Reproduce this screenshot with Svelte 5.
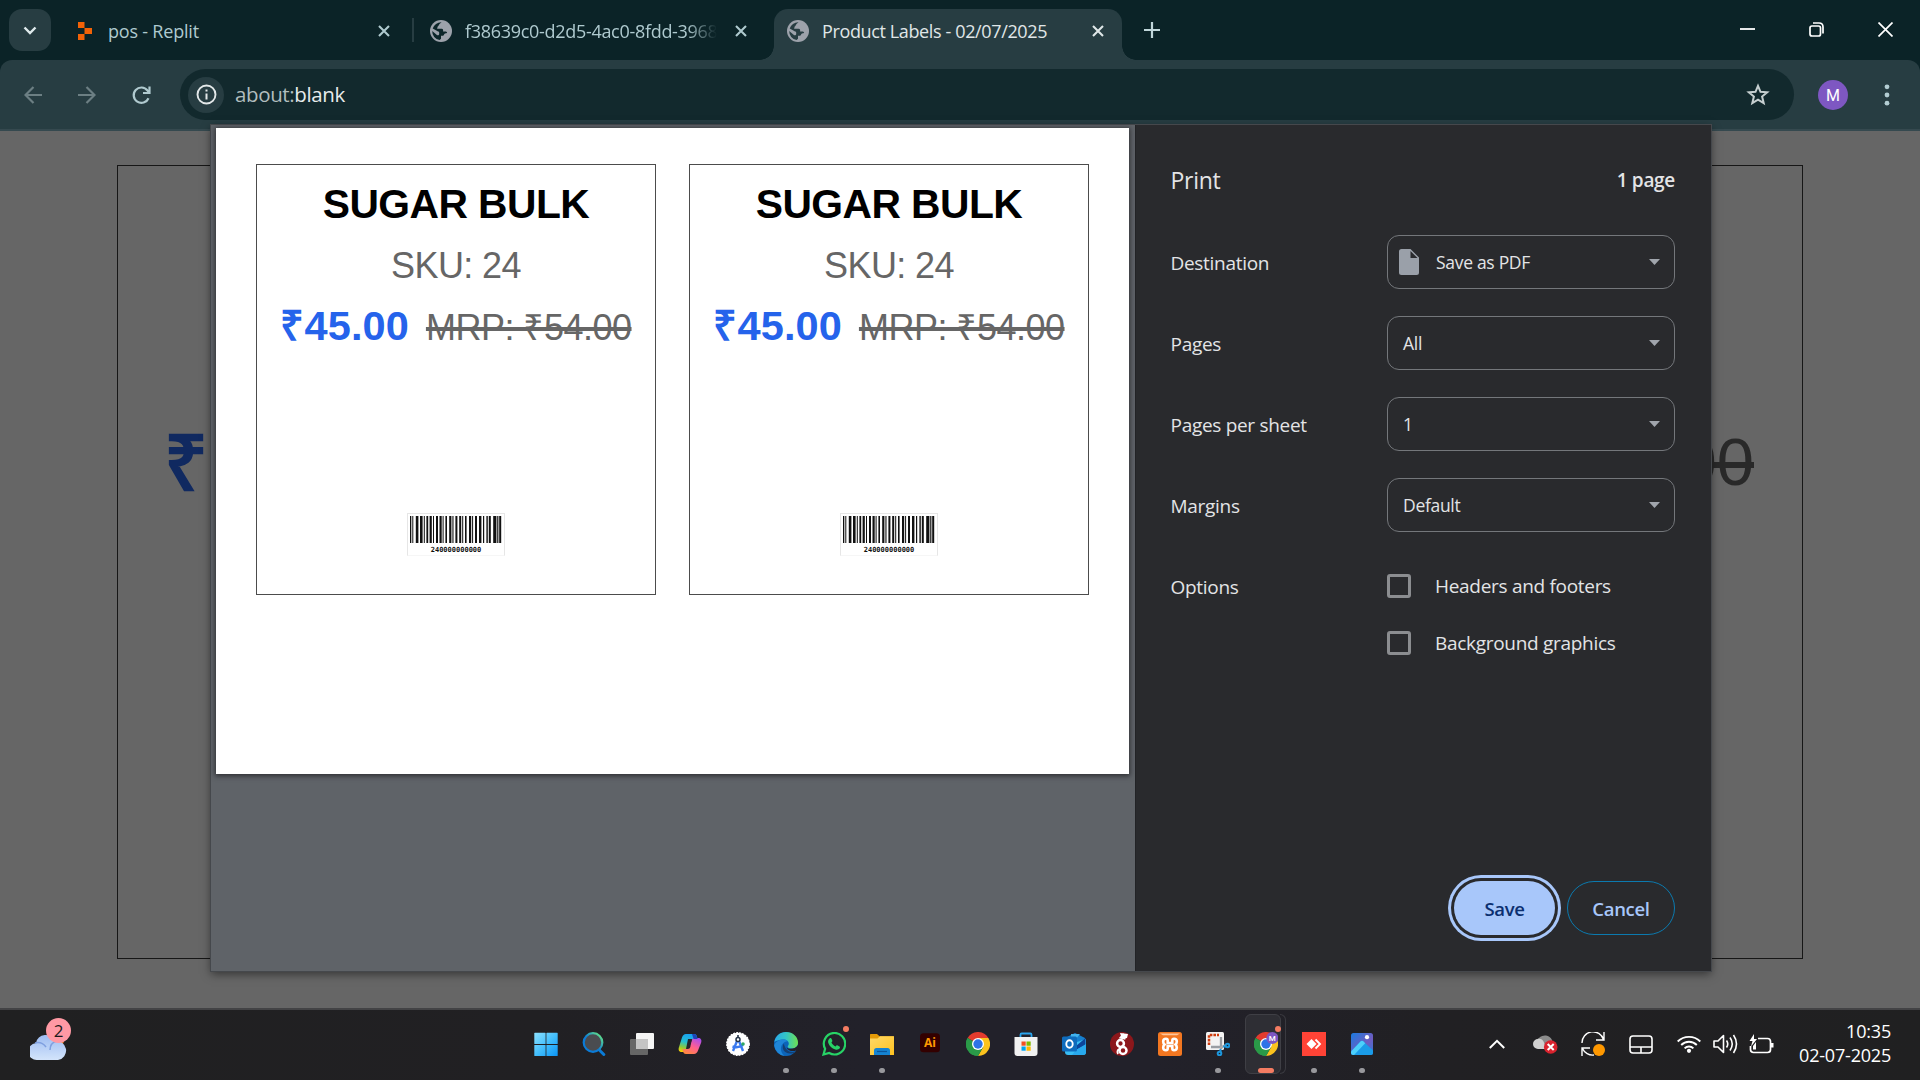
<script>
  const tabs = [
    { title: 'pos - Replit', icon: 'replit' },
    { title: 'f38639c0-d2d5-4ac0-8fdd-3968', icon: 'globe' },
    { title: 'Product Labels - 02/07/2025', icon: 'globe', active: true }
  ];
  const settings = [
    { label: 'Destination', value: 'Save as PDF', file: true },
    { label: 'Pages', value: 'All' },
    { label: 'Pages per sheet', value: '1' },
    { label: 'Margins', value: 'Default' }
  ];
  const options = ['Headers and footers', 'Background graphics'];
  const labels = [1, 2];
  // [x, width] of every barcode stripe
  const bars = [
    [0, 1.3], [2.3, 1], [5.8, 2.6], [10, 2.6], [13.8, 1], [16.4, 1.8], [19.6, 2.2], [23, 1],
    [26, 2], [29.5, 2.2], [32.6, 1], [35.4, 1.6], [39.2, 2.2], [42.4, 1.1], [45.4, 2], [49.2, 2],
    [52.2, 1], [55, 1.6], [59, 2.2], [62.1, 1], [65, 2], [69, 2.4], [73, 1.2], [76.4, 1.4],
    [78.8, 2], [83.2, 3.2], [87.2, 1.2], [89.2, 2]
  ];
  const apps = [
    { id: 'start' }, { id: 'search' }, { id: 'tasks' }, { id: 'copilot' }, { id: 'studio' },
    { id: 'edge', dot: true }, { id: 'whatsapp', dot: true, alert: true }, { id: 'folder', dot: true },
    { id: 'ai' }, { id: 'chrome' }, { id: 'store' }, { id: 'outlook' }, { id: 'dragon' },
    { id: 'xampp' }, { id: 'snip', dot: true }, { id: 'chromeM', open: true, alert: true },
    { id: 'anydesk', dot: true }, { id: 'photos', dot: true }
  ];
</script>

{#snippet cross()}
  <svg class="cross" width="12" height="12" viewBox="0 0 12 12"><path d="M1 1l10 10M11 1L1 11" /></svg>
{/snippet}

{#snippet globe()}
  <svg width="22" height="22" viewBox="0 0 22 22">
    <circle cx="11" cy="11" r="11" fill="#9da2ab" />
    <path class="sea" d="M11.5 2.2l-2 1.9c-.8.8-.6 1.9-1.8 2.5l-.6 2.1h4.6c1.6 0 1.6 2 1.4 2.7h2.6c1 0 1.4.9 1.4 1.7l-2.1.3c-1.2.4-.8 1.9-1.9 2.4H11v2.9l-1.4 1.3A8.8 8.8 0 0 1 2.2 11l4.7 4.1c1 .6 2.3.2 2.3-1.1v-1.6c-.2-1-1.5-1.1-2.4-1.7L2.7 8.6A8.8 8.8 0 0 1 11.500 2.200z" />
  </svg>
{/snippet}

{#snippet chrome()}
  <path d="M12 12L1.600 6A12 12 0 0 1 22.400 6z" fill="#e33b2e" />
  <path d="M12 12V24A12 12 0 0 1 1.600 6z" fill="#2a9a48" />
  <path d="M12 6h10.400A12 12 0 0 1 12 24l5.200-9z" fill="#fcc31e" />
  <path d="M6.800 15L1.600 6A12 12 0 0 0 12 24l5.200-9z" fill="#2a9a48" />
  <circle cx="12" cy="12" r="6" fill="#fff" />
  <circle cx="12" cy="12" r="4.700" fill="#2d73e8" />
{/snippet}

{#snippet app(id)}
  <svg width="24" height="24" viewBox="0 0 24 24">
    {#if id === 'start'}
      <g fill="url(#gStart)"><rect width="11.300" height="11.200" y=".8" x=".3" rx=".6" /><rect x="12.400" y=".8" width="11.300" height="11.200" rx=".6" /><rect x=".3" y="12.900" width="11.300" height="11.200" rx=".6" /><rect x="12.400" y="12.900" width="11.300" height="11.200" rx=".6" /></g>
    {:else if id === 'search'}
      <path d="M16.800 17.500l5 5" stroke="#0b7bd6" stroke-width="3" stroke-linecap="round" />
      <circle cx="11" cy="10.500" r="9.300" fill="#4a4c50" stroke="url(#gSearch)" stroke-width="2.200" />
    {:else if id === 'tasks'}
      <rect x="0" y="7" width="18" height="16" rx="1" fill="#666" />
      <rect x="6" y="1" width="18" height="16" rx="1" fill="#f5f5f5" />
      <rect x="6" y="7" width="12" height="10" fill="#c4c4c4" />
    {:else if id === 'copilot'}
      <path d="M8 2h8c2 0 2.600 1.200 3 3l.6 2h-4c-2 0-2.600 1-3 2.500L10.500 17c-.5 1.800-1.300 3-3.500 3H4c-3 0-4-2-3-5L4 5.500C4.800 3.200 6 2 8 2z" fill="url(#gCop1)" />
      <path d="M16 22H8c-2 0-2.600-1.200-3-3l-.6-2h4c2 0 2.600-1 3-2.500L13.500 9c.5-1.800 1.300-3 3.500-3h3c3 0 4 2 3 5l-3 7.500c-.8 2.300-2 3.500-4 3.500z" fill="url(#gCop2)" />
      <path d="M10 7h4l-1.600 7.500c-.5 1.800-1 2.500-3 2.500H8z" fill="#24242a" />
      <path d="M14 2h2c2 0 2.600 1.200 3 3l.6 2h-4z" fill="#1d45b8" />
    {:else if id === 'studio'}
      <circle cx="12" cy="12" r="11.300" fill="#fff" stroke="#fff" stroke-width="1.200" stroke-dasharray="2 1" />
      <path d="M12 6.500L7 19M12 6.500L17 19M6.500 14.500q5.500 2 10.500-1.500" fill="none" stroke="#3a7af0" stroke-width="2.400" />
      <circle cx="12" cy="7.500" r="2" fill="#fff" stroke="#26354a" stroke-width="1.500" /><path d="M12 3v2.500" stroke="#26354a" stroke-width="1.600" />
      <circle cx="17" cy="12" r="1.800" fill="#2fa866" />
    {:else if id === 'edge'}
      <circle cx="12" cy="12" r="12" fill="#0c64b9" />
      <path d="M.3 10C1.300 4 6 0 12 0c7 0 12 5 12 10.500 0 4-3 6-6.300 6-2.500 0-4-1-4-2 0-.7 1.100-1.200 1.100-3 0-2.300-2.300-4-5.300-4C5.500 7.500 1.500 9 .3 10z" fill="url(#gEdge)" />
      <path d="M9.500 7.500c-5 0-8.500 3-9.300 6A12 12 0 0 0 11 24c-4-2.500-5.500-8-2.500-12 1.300-1.500 3-2.500 5.300-2.700-1-1.200-2.600-1.800-4.300-1.800z" fill="#1f86d8" />
      <path d="M9.800 11.500c-2.800 4.500.2 10 6.200 10 2.500 0 4.500-.8 6-2.300-5 2-10.500.3-12.200-7.700z" fill="#143f73" />
      <path d="M24 13v6l-2-.5c-2 1-8 1.200-9.500-3 2.500 2.500 9 1.500 11.500-2.500z" fill="#23222a" />
    {:else if id === 'whatsapp'}
      <path d="M1.500 22.500l1.600-5.700A10.700 10.700 0 1 1 7.200 21z" fill="none" stroke="#27d366" stroke-width="2.200" />
      <path d="M7.500 6.500c.8-.8 1.700-.6 2 .2l.8 1.900c.2.700-.2 1.200-.9 2 .9 1.900 2.200 3 4.200 3.900.8-1 1.100-1.500 1.700-1.200l2.200 1.100c.8.400.5 1.500 0 2.200-.8 1-2.500 1.400-4.200.9-3.500-1.100-5.800-3.400-7-6.500-.5-1.600-.1-3.500 1.200-4.500z" fill="#27d366" />
    {:else if id === 'folder'}
      <path d="M0 4V2.500Q0 2 .8 2H7l2.500 2.300H23q1 0 1 .9V8H0z" fill="#e59b08" />
      <path d="M0 6.500h7.500L10 4.300h14V23H0z" fill="url(#gFold)" />
      <path d="M4 23v-4.500Q4 16 6.500 16h11q2.500 0 2.500 2.500V23z" fill="#1583d2" /><path d="M7 19.500h10" stroke="#0a559b" stroke-width="1.200" />
    {:else if id === 'ai'}
      <rect x="2" y="1.300" width="20" height="19" rx="3.500" fill="#330000" />
      <text x="12" y="15" class="ai" text-anchor="middle">Ai</text>
    {:else if id === 'chrome'}
      {@render chrome()}
    {:else if id === 'store'}
      <path d="M6.500 7V2.700Q6.500 1.500 7.700 1.500h8.600q1.200 0 1.200 1.200V7" fill="none" stroke="#2aa4ec" stroke-width="1.800" />
      <path d="M.5 5h23v16q0 3-3 3h-17q-3 0-3-3z" fill="#f1f1f1" />
      <path d="M7.500 9.500h4.200v4.200H7.500z" fill="#f25022" /><path d="M12.500 9.500h4.200v4.200h-4.200z" fill="#7fba00" /><path d="M7.500 14.500h4.200v4.200H7.500z" fill="#00a4ef" /><path d="M12.500 14.500h4.200v4.200h-4.200z" fill="#ffb900" />
    {:else if id === 'outlook'}
      <path d="M3 6l10-5 10 5v6H3z" fill="#1680cf" /><path d="M9 2h9l-9 11z" fill="#42b4ee" />
      <path d="M3 14L24 7v13q0 3-3 3H6q-3 0-3-3z" fill="#39bdf4" /><path d="M14 14l9.500-8v7L14 18z" fill="#0c459b" /><path d="M14 18l10-6v8q0 3-3 3H10z" fill="#28a9ed" />
      <rect x="0" y="4.500" width="15" height="15" rx="1.500" fill="#0f6cbd" />
      <ellipse cx="7.500" cy="12" rx="3.200" ry="3.700" fill="none" stroke="#fff" stroke-width="1.900" />
    {:else if id === 'dragon'}
      <circle cx="12" cy="12" r="12" fill="#8c171b" />
      <g fill="none" stroke="#fff" stroke-width="2.500"><circle cx="10.500" cy="11.500" r="3.400" /><circle cx="13" cy="18.500" r="3.500" /><path d="M14 2l-3 3.500 4.500 1" /><path d="M9 17q-2.500 2-1 5" stroke-width="1.800" /></g>
      <path d="M10 1l8 1-1 4-5 1z" fill="#fff" />
    {:else if id === 'xampp'}
      <rect width="24" height="24" rx="2.500" fill="#f37721" /><path d="M2 1.500h20l-3 1.700H5z" fill="#ffc69a" />
      <path d="M8 6.700q1.700 0 1.700 2v2.300h4.600V8.700q0-2 1.700-2 2.800 0 2.800 2.700 0 1.800-1.300 3.100 1.300 1.200 1.300 3 0 2.800-2.800 2.800-1.700 0-1.700-2v-2.300H9.700v2.300q0 2-1.700 2-2.800 0-2.800-2.800 0-1.800 1.300-3-1.300-1.300-1.300-3.100 0-2.700 2.800-2.700z" fill="none" stroke="#fff" stroke-width="2.600" />
    {:else if id === 'snip'}
      <rect width="18" height="18" rx="1.500" fill="#f3f3f3" />
      <path d="M3 13V3h10" fill="none" stroke="#cf3c0e" stroke-width="2.500" stroke-dasharray="2.600 1" />
      <path d="M15 5v12M5 15h12" stroke="#999da3" stroke-width="2.300" /><path d="M14 16l5-3" stroke="#aaa" stroke-width="2" />
      <g fill="none" stroke="#1c96dc" stroke-width="2"><circle cx="13.500" cy="21.500" r="1.800" /><circle cx="21.500" cy="13.500" r="1.800" /><path d="M14.500 20v-3M20 14.500h-3" /></g>
    {:else if id === 'chromeM'}
      {@render chrome()}
      <circle cx="18.300" cy="6" r="6" fill="#7e57c2" /><text x="18.300" y="9" class="mini" text-anchor="middle">M</text>
    {:else if id === 'anydesk'}
      <rect width="24" height="24" fill="#ff4336" /><path d="M4.500 12l5-5 5 5-5 5z" fill="#fff" /><path d="M12.500 7.500l4.500 4.500-4.500 4.500" fill="none" stroke="#fff" stroke-width="1.900" transform="translate(1)" />
    {:else if id === 'photos'}
      <rect x="1" y="1" width="22" height="22" rx="2.500" fill="url(#gPhoto)" />
      <circle cx="17" cy="5.200" r="2.100" fill="#fff" />
      <path d="M1 19.500l9.500-10q1.500-1.500 3 0L23 18.500V20.500q0 2.500-2.500 2.500H3.500Q1 23 1 20.500z" fill="#1a9ce8" />
      <path d="M1 19.500l9.500-10q1.500-1.500 3 0l1.700 1.700L4 23Q1 23 1 20.500z" fill="#4cd0fb" />
    {/if}
  </svg>
{/snippet}

<svg class="defs" width="0" height="0">
  <defs>
    <linearGradient id="gStart" gradientUnits="userSpaceOnUse" x1="0" y1="0" x2="24" y2="24"><stop stop-color="#8fe3ff" /><stop offset=".55" stop-color="#3fbcfc" /><stop offset="1" stop-color="#0a94f5" /></linearGradient>
    <linearGradient id="gSearch" x1="0" y1="1" x2="1" y2="0"><stop offset=".45" stop-color="#0b7bd6" /><stop offset=".9" stop-color="#5fdd8a" /></linearGradient>
    <linearGradient id="gCop1" x1=".5" y1="0" x2=".2" y2="1"><stop stop-color="#19a0f0" /><stop offset=".45" stop-color="#25bfd0" /><stop offset=".75" stop-color="#8cc83c" /><stop offset="1" stop-color="#ffd000" /></linearGradient>
    <linearGradient id="gCop2" x1=".8" y1="0" x2=".2" y2="1"><stop stop-color="#a84df0" /><stop offset=".5" stop-color="#ff5f8f" /><stop offset="1" stop-color="#ff8a3c" /></linearGradient>
    <linearGradient id="gEdge"><stop stop-color="#2aa9e8" /><stop offset=".5" stop-color="#33c5c5" /><stop offset="1" stop-color="#6fe04f" /></linearGradient>
    <linearGradient id="gFold" x1="0" y1="0" x2="1" y2="1"><stop stop-color="#ffd968" /><stop offset="1" stop-color="#ffc220" /></linearGradient>
    <linearGradient id="gPhoto" x1="0" y1="0" x2="1" y2="1"><stop stop-color="#1a7be0" /><stop offset=".6" stop-color="#6f5cc0" /><stop offset="1" stop-color="#2a79d8" /></linearGradient>
    <linearGradient id="gCloud" x1="0" y1="0" x2="0" y2="1"><stop stop-color="#9dbcf2" /><stop offset="1" stop-color="#d3e4fb" /></linearGradient>
  </defs>
</svg>

<div class="screen">
  <header class="strip">
    <div class="tabsearch"><svg width="14" height="9" viewBox="0 0 14 9"><path d="M1.500 1.500L7 7l5.500-5.500" fill="none" stroke="#dfeaec" stroke-width="2.400" /></svg></div>
    {#each tabs as tab, i}
      <div class="tab t{i}" class:active={tab.active}>
        {#if tab.icon === 'replit'}
          <svg class="fav" width="22" height="18" viewBox="0 0 22 18"><path d="M4 0h6.500v6H4zM10.500 6H18v6h-7.500zM4 12h6.500v6H4z" fill="#f26207" /></svg>
        {:else}
          {@render globe()}
        {/if}
        <span class="title">{tab.title}</span>
        {@render cross()}
      </div>
    {/each}
    <svg class="plus" width="16" height="16" viewBox="0 0 16 16"><path d="M8 0v16M0 8h16" stroke="#c0d6da" stroke-width="2.200" /></svg>
    <div class="wincontrols">
      <svg width="15" height="15" viewBox="0 0 15 15"><path d="M0 7h15" stroke-width="1.800" /></svg>
      <svg width="15" height="15" viewBox="0 0 15 15"><rect x="1" y="4" width="10.500" height="10" rx="2" /><path d="M4 1h6q4 0 4 4v6.500" /></svg>
      <svg width="15" height="15" viewBox="0 0 15 15"><path d="M.5.500l14 14M14.500.500l-14 14" /></svg>
    </div>
  </header>

  <div class="toolbarback">
    <div class="toolbar">
      <svg class="nav dim" width="18" height="18" viewBox="0 0 18 18"><path d="M18 9H2M9.500 1L1.500 9l8 8" /></svg>
      <svg class="nav dim" width="18" height="18" viewBox="0 0 18 18"><path d="M0 9h16M8.500 1l8 8-8 8" /></svg>
      <svg class="nav" width="19" height="19" viewBox="0 0 19 19"><path d="M16.500 12.200A7.700 7.700 0 1 1 15.500 4.500L17 6.300M17.500 0.500v6.500h-6.500" /></svg>
      <div class="omnibox">
        <div class="info"><svg width="21" height="21" viewBox="0 0 21 21"><circle cx="10.500" cy="10.500" r="9" fill="none" stroke="#e3e8e9" stroke-width="1.900" /><path d="M10.500 9.500v6M10.500 5.500v2" stroke="#e3e8e9" stroke-width="2" /></svg></div>
        <span class="url"><i>about:</i>blank</span>
        <svg class="star" width="24" height="23" viewBox="0 0 24 23"><path d="M12 2.800l2.500 6 6.700.5-5.100 4.300 1.600 6.500-5.700-3.500-5.700 3.500 1.600-6.500L2.800 9.300l6.700-.5z" fill="none" stroke="#c6cfd0" stroke-width="2" /></svg>
      </div>
      <div class="avatar">M</div>
      <svg class="kebab" width="6" height="22" viewBox="0 0 6 22"><g fill="#b3cdd2"><circle cx="3" cy="2.800" r="2.400" /><circle cx="3" cy="11" r="2.400" /><circle cx="3" cy="19.200" r="2.400" /></g></svg>
    </div>
  </div>

  <main class="viewport">
    <div class="biglabel">
      <span class="bigprice">₹</span>
      <span class="bigmrp">00</span>
    </div>
  </main>

  <section class="dialog">
    <div class="preview">
      <div class="paper">
        {#each labels as _}
          <article class="label">
            <h2>SUGAR BULK</h2>
            <p class="sku">SKU: 24</p>
            <p class="prices"><b>₹45.00</b><s>MRP: ₹54.00</s></p>
            <div class="barcode">
              <svg width="92" height="27" viewBox="0 0 92 27">{#each bars as [x, w]}<rect {x} y="0" width={w} height="27" fill="#111" />{/each}</svg>
              <span>240000000000</span>
            </div>
          </article>
        {/each}
      </div>
    </div>
    <aside class="panel">
      <div class="head"><h1>Print</h1><strong>1 page</strong></div>
      {#each settings as s}
        <div class="row">
          <span class="name">{s.label}</span>
          <div class="select">
            {#if s.file}<svg class="file" width="20" height="26" viewBox="0 0 20 26"><path d="M2.500 0h9L20 8.500v15q0 2.500-2.500 2.500h-15Q0 26 0 23.500v-21Q0 0 2.500 0zM11.500 2v7h7z" fill="#9aa0a9" fill-rule="evenodd" /></svg>{/if}
            <span>{s.value}</span>
            <svg class="caret" width="11" height="6" viewBox="0 0 11 6"><path d="M0 0h11L5.500 6z" fill="#a0a5ac" /></svg>
          </div>
        </div>
      {/each}
      <div class="row opts">
        <span class="name">Options</span>
        <div class="checks">
          {#each options as o}<div class="check"><span class="box"></span><span>{o}</span></div>{/each}
        </div>
      </div>
      <div class="actions"><button class="save">Save</button><button class="cancel">Cancel</button></div>
    </aside>
  </section>

  <footer class="taskbar">
    <div class="weather">
      <svg width="37" height="30" viewBox="0 0 37 30"><circle cx="25" cy="9" r="9" fill="#f4811f" /><path d="M7.500 29A7.500 7.500 0 0 1 6 12 10 10 0 0 1 25 10a9.600 9.600 0 1 1 3 19z" fill="url(#gCloud)" /><path d="M5 12c4-1 8 0 11 4M20 19c0-5 3-8 7-9" stroke="#7f9fe0" stroke-width="1.500" fill="none" /></svg>
      <span>2</span>
    </div>
    <div class="apps">
      {#each apps as a}
        <div class="app" class:open={a.open}>
          {@render app(a.id)}
          {#if a.dot}<i class="dot"></i>{/if}
          {#if a.open}<i class="dot wide"></i>{/if}
          {#if a.alert}<i class="alert"></i>{/if}
        </div>
      {/each}
    </div>
    <div class="tray">
      <svg width="16" height="10" viewBox="0 0 16 10"><path d="M.8 9L8 1.800 15.200 9" stroke-width="2" /></svg>
      <svg class="g1" width="25" height="20" viewBox="0 0 25 20"><path d="M6 15A6 6 0 0 1 6 4a8 8 0 0 1 13 2l1 9z" fill="#8b8b8b" stroke="none" /><path d="M5 15a5 5 0 0 1 0-10c5-1 7 4 7 10z" fill="#d0d0d0" stroke="none" /><circle cx="17.700" cy="13" r="6.800" fill="#d9232e" stroke="none" /><path d="M14.700 10l6 6M20.700 10l-6 6" stroke-width="2" /></svg>
      <svg class="g2" width="24" height="24" viewBox="0 0 24 24"><path d="M1 11A11 11 0 0 1 22.500 7.500M23 0v8h-8M1 24v-8h8M1.500 16.500A11 11 0 0 0 13 23" stroke-width="1.400" /><circle cx="18" cy="18" r="6" fill="#ff9800" stroke="none" /></svg>
      <svg class="g3" width="24" height="19" viewBox="0 0 24 19"><rect x="1" y="1" width="22" height="17" rx="3" stroke-width="1.600" /><path d="M1 12h22M12 12v6" stroke-width="1.600" /></svg>
      <svg class="g4" width="24" height="18" viewBox="0 0 24 18"><path d="M.7 6.500a16 16 0 0 1 22.600 0M4.200 10a11 11 0 0 1 15.600 0M7.600 13.300a6.200 6.200 0 0 1 8.800 0" stroke-width="1.900" /><circle cx="12" cy="15.800" r="2.100" fill="#fff" stroke="none" /></svg>
      <svg class="g5" width="25" height="20" viewBox="0 0 25 20"><path d="M1 7h4l5.500-5.500v17L5 13H1z" stroke-width="1.600" stroke-linejoin="round" /><path d="M13.500 6.500q2.500 3.500 0 7M17 3.500q4.500 6.500 0 13M20.500 1q6 9 0 18" stroke-width="1.600" /></svg>
      <svg class="g6" width="25" height="20" viewBox="0 0 25 20"><path d="M9 4.500h9.500q3 0 3 3v8q0 3-3 3h-14q-3 0-3-3V12" stroke-width="1.700" /><path d="M22 9h2.500v4.500H22z" fill="#fff" stroke="none" /><path d="M5 0L.5 7h3L2 12.500 8 5H5zM4 15.500V12l3-4v7.500z" fill="#fff" stroke="none" /></svg>
      <div class="clock"><span>10:35</span><span>02-07-2025</span></div>
    </div>
  </footer>
</div>

<style>
  :global(body) { margin: 0; background: #666; overflow: hidden; }
  .defs { position: absolute; }
  .screen { position: relative; width: 1920px; height: 1080px; display: flex; flex-direction: column; overflow: hidden; font-family: "Open Sans", "Noto Sans", sans-serif; font-stretch: 93%; font-size: 18px; }
  svg { display: block; flex: none; }

  .strip { height: 60px; flex: none; box-sizing: border-box; display: flex; align-items: flex-start; background: #0b2327; color: #afcacf; }
  .tabsearch { width: 42px; height: 42px; margin: 9px 0 0 9px; border-radius: 13px; background: #273d42; display: grid; place-items: center; }
  .tab { height: 51px; margin-top: 9px; box-sizing: border-box; display: flex; align-items: center; padding-bottom: 8px; }
  .t0 { width: 359px; margin-left: 23px; position: relative; }
  .t0::after { content: ""; position: absolute; right: 19px; top: 9px; width: 2px; height: 24px; background: #273d42; }
  .t0 .title { margin-left: 12px; width: 262px; letter-spacing: -.2px; }
  .t1 { width: 343px; margin-left: -3px; }
  .t1 .title { width: 252px; margin-left: 13px; mask-image: linear-gradient(90deg, #000 88%, transparent); }
  .t1 .cross { margin-left: 18px; }
  .t0 .cross { margin-left: 8px; }
  .tab.t2 { position: relative; width: 348px; margin-left: 1px; padding-left: 13px; background: #273d42; border-radius: 14px 14px 0 0; color: #e0e7e8; }
  .t2::before, .t2::after { content: ""; position: absolute; bottom: 0; width: 14px; height: 14px; }
  .t2::before { left: -14px; background: radial-gradient(circle at 0 0, transparent 13.500px, #273d42 14px); }
  .t2::after { right: -14px; background: radial-gradient(circle at 100% 0, transparent 13.500px, #273d42 14px); }
  .t2 .title { margin-left: 13px; width: 270px; letter-spacing: -.37px; }
  .title { white-space: nowrap; overflow: hidden; line-height: 26px; letter-spacing: -.3px; }
  .cross path { fill: none; stroke: currentColor; stroke-width: 2.100; }
  .sea { fill: #0d262a; }
  .t2 .sea { fill: #273d42; }
  .plus { margin: 22px 0 0 22px; }
  .wincontrols { margin: 22px 27px 0 auto; display: flex; gap: 54px; }
  .wincontrols svg { fill: none; stroke: #fff; stroke-width: 1.700; }

  .toolbarback { background: #0b2327; flex: none; }
  .toolbar { height: 71px; box-sizing: border-box; background: #273d42; border-radius: 12px 12px 0 0; border-bottom: 2px solid #35494f; display: flex; align-items: flex-start; padding: 9px 30px 0 24px; }
  .nav { margin: 17px 36px 0 0; fill: none; stroke: #b0cacf; stroke-width: 2.200; }
  .nav:nth-child(3) { margin-right: 29px; }
  .dim { stroke: #6c7f83; }
  .omnibox { width: 1614px; height: 51px; border-radius: 26px; background: #12292d; display: flex; align-items: center; box-sizing: border-box; padding: 0 24px 0 8px; }
  .info { width: 36px; height: 36px; border-radius: 50%; background: #273d42; display: grid; place-items: center; }
  .url { margin-left: 11px; padding-bottom: 2px; font-size: 20.500px; letter-spacing: -.37px; color: #e7ebeb; }
  .url i { font-style: normal; color: #b1bdbe; }
  .star { margin-left: auto; }
  .avatar { width: 30px; height: 30px; margin: 11px 0 0 24px; border-radius: 50%; background: #7e57c2; color: #fff; font: 400 16px/31px Roboto, sans-serif; text-align: center; }
  .kebab { margin: 15px 0 0 36px; }

  .viewport { height: 877px; flex: none; box-sizing: border-box; background: #666; padding: 34px 117px 49px; }
  .biglabel { height: 100%; box-sizing: border-box; border: 1px solid #161616; display: flex; justify-content: space-between; align-items: flex-start; padding: 251px 48px 0 46px; font-family: "Liberation Sans", Arial, sans-serif; }
  .bigprice { font-weight: 700; font-size: 77px; line-height: 90px; color: #102960; padding-top: 1px; }
  .bigmrp { font-size: 67px; line-height: 90px; color: #292929; text-decoration: line-through; text-decoration-thickness: 6px; }

  .dialog { position: absolute; left: 211px; top: 125px; width: 1500px; height: 846px; display: flex; box-shadow: 0 0 0 1px #45484c, 0 3px 9px rgba(0,0,0,.5); }
  .preview { width: 923.500px; background: #5f6368; padding: 3px 0 0 5px; box-sizing: border-box; }
  .paper { width: 913px; height: 646px; box-sizing: border-box; background: #fff; display: flex; gap: 33px; padding: 36px 0 0 40px; box-shadow: 0 1px 5px 1px rgba(30,30,34,.75); }
  .label { width: 400px; height: 431px; box-sizing: border-box; border: 1px solid #4c4c4c; display: flex; flex-direction: column; align-items: center; font-family: "Liberation Sans", Arial, sans-serif; }
  .label h2 { margin: 15px 0 0; font-size: 40.800px; letter-spacing: -.55px; line-height: 48px; color: #000; white-space: nowrap; }
  .label p { margin: 0; white-space: nowrap; }
  .sku { font-size: 36px; letter-spacing: -.6px; line-height: 42px; color: #666; padding-top: 17px; }
  .prices { display: flex; align-items: baseline; gap: 17px; padding-top: 15px; line-height: 48px; }
  .prices b { font-size: 41.500px; letter-spacing: .1px; color: #2563eb; }
  .prices s { font-size: 36px; letter-spacing: -.5px; color: #666; text-decoration-thickness: 4px; }
  .barcode { width: 98px; height: 43px; margin-top: auto; margin-bottom: 38px; box-sizing: border-box; border: 1px solid #e6e6e6; border-bottom-color: #f6f6f6; display: flex; flex-direction: column; align-items: center; padding-top: 2px; }
  .barcode span { font: 700 7px/9px "DejaVu Sans Mono", monospace; margin-top: 3px; color: #111; }

  .panel { flex: 1; background: #292a2d; color: #e3e4e6; box-sizing: border-box; padding: 0 36px 0 35px; display: flex; flex-direction: column; border-left: 1px solid #222326; font-size: 19px; letter-spacing: -.3px; }
  .head { height: 110px; box-sizing: border-box; padding-bottom: 1px; display: flex; justify-content: space-between; align-items: center; }
  .head h1 { margin: 0; font-weight: 400; font-size: 23px; }
  .head strong { font-weight: 600; font-size: 19px; }
  .row { height: 54px; margin-bottom: 27px; display: flex; justify-content: space-between; align-items: center; flex: none; }
  .name { padding-top: 1px; }
  .select { width: 288px; height: 54px; box-sizing: border-box; border: 1px solid #74777b; border-radius: 12px; display: flex; align-items: center; padding: 0 14px 0 15px; font-size: 17.500px; }
  .file { margin: 0 17px 0 -4px; }
  .caret { margin-left: auto; }
  .opts { align-items: flex-start; height: 140px; line-height: 54px; margin: 0; }
  .checks { width: 288px; }
  .check { display: flex; align-items: center; height: 57px; gap: 24px; margin-top: -2px; }
  .check + .check { margin-top: 0; }
  .box { width: 24px; height: 24px; box-sizing: border-box; border: 3px solid #8b8d90; border-radius: 3px; }
  .actions { margin-top: auto; margin-bottom: 36px; display: flex; justify-content: flex-end; gap: 12px; }
  button { font: 600 18.500px "Open Sans", sans-serif; font-stretch: 93%; letter-spacing: -.3px; height: 54px; padding: 0; border-radius: 27px; box-sizing: border-box; }
  .save { width: 101px; border: 0; background: #a8c7fa; color: #0b2f70; box-shadow: 0 0 0 3px #292a2d, 0 0 0 6px #a8c7fa; }
  .cancel { width: 108px; border: 1px solid #0b7aaf; background: none; color: #a8c7fa; }

  .taskbar { position: relative; height: 72px; flex: none; box-sizing: border-box; border-top: 2px solid #434345; background: linear-gradient(90deg, #202021, #212023 28%, #22212a 45%, #22212a 60%, #212023 75%, #202021); display: flex; }
  .weather { position: relative; width: 532px; flex: none; box-sizing: border-box; padding: 21px 0 0 30px; }
  .weather span { position: absolute; left: 46px; top: 8px; width: 25px; height: 25px; border-radius: 50%; background: #ff99a4; color: #1a1a1a; font-size: 17px; line-height: 25px; text-align: center; }
  .apps { display: flex; gap: 6px; margin-left: -7px; }
  .app { position: relative; width: 42px; height: 70px; display: flex; justify-content: center; padding-top: 22px; box-sizing: border-box; }
  .app svg { position: relative; }
  .open::before { content: ""; position: absolute; left: 0; top: 4px; width: 34px; height: 58px; border: 1px solid #3f3f45; border-radius: 6px; background: #2e2e34; }
  .open::after { content: ""; position: absolute; left: 35px; top: 4px; width: 5px; height: 58px; border: 1px solid #3a3a40; border-left: 0; border-radius: 0 6px 6px 0; }
  .dot { position: absolute; left: 18px; top: 58px; width: 6px; height: 5px; border-radius: 3px; background: #98989c; }
  .wide { left: 13px; width: 16px; background: #f47c62; }
  .alert { position: absolute; left: 30px; top: 16px; width: 6px; height: 6px; border-radius: 50%; background: #f47c62; }
  .ai { font: 700 12px "Open Sans", sans-serif; fill: #ff9a00; }
  .mini { font: 500 8px Roboto, sans-serif; fill: #fff; }
  .tray { margin-left: auto; padding-right: 29px; display: flex; align-items: center; height: 68px; color: #fff; }
  .tray svg { fill: none; stroke: #fff; }
  .g1 { margin-left: 28px; }
  .g2 { margin-left: 23px; }
  .g3 { margin-left: 24px; }
  .g4 { margin-left: 24px; }
  .g5 { margin-left: 12px; }
  .g6 { margin-left: 11px; }
  .clock { width: 117px; display: flex; flex-direction: column; align-items: flex-end; font-size: 18px; line-height: 24px; letter-spacing: -.2px; padding-bottom: 3px; }
</style>
